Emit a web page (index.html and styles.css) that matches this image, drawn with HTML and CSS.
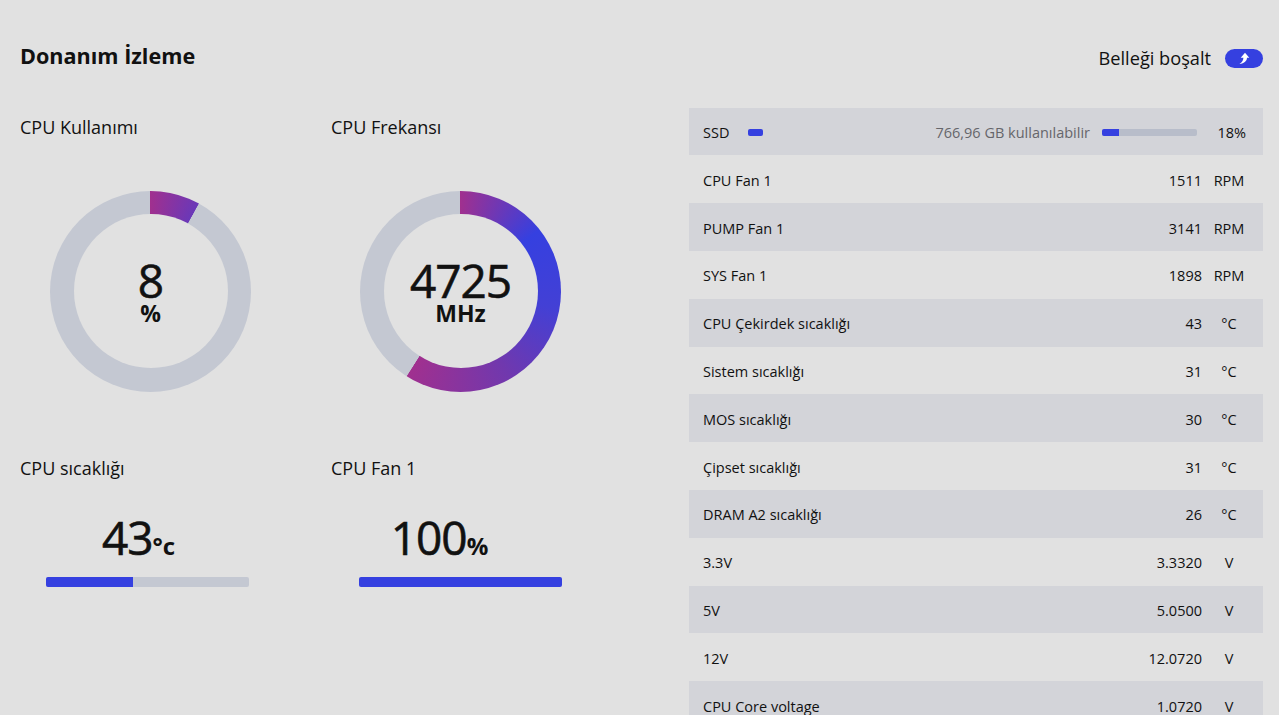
FILE: index.html
```html
<!doctype html>
<html lang="tr">
  <head>
    <meta charset="UTF-8" />
    <meta name="viewport" content="width=device-width, initial-scale=1.0" />
    <title>Donanım İzleme</title>
    <link rel="stylesheet" href="styles.css">
  </head>
  <body>
    <div class="page">
      <div class="header">
        <h1>Donanım İzleme</h1>
        <div class="release">
          <span>Belleği boşalt</span>
          <button class="release-btn" aria-label="Belleği boşalt">
            <svg width="14" height="14" viewBox="0 0 14 14">
              <path d="M8 1.8 L12.3 6.8 L10 6.8 C10 9.8 7.5 12.4 2.4 13 C5 11.4 6.4 9.4 6.4 6.8 L3.7 6.8 Z" fill="#fff" />
            </svg>
          </button>
        </div>
      </div>

      <div class="content">
        <!-- Göstergeler -->
        <div class="gauges">
          <div class="gauge-box">
            <h2>CPU Kullanımı</h2>
            <div class="ring ring-usage">
              <div class="ring-inner">
                <span class="ring-value">8</span>
                <span class="ring-unit">%</span>
              </div>
            </div>
          </div>
          <div class="gauge-box">
            <h2>CPU Frekansı</h2>
            <div class="ring ring-freq">
              <div class="ring-inner">
                <span class="ring-value">4725</span>
                <span class="ring-unit">MHz</span>
              </div>
            </div>
          </div>
          <div class="gauge-box">
            <h2>CPU sıcaklığı</h2>
            <div class="stat">
              <div class="stat-value">43<span class="stat-unit">°c</span></div>
              <div class="stat-bar"><div class="stat-fill" style="width: 43%"></div></div>
            </div>
          </div>
          <div class="gauge-box">
            <h2>CPU Fan 1</h2>
            <div class="stat stat-fan">
              <div class="stat-value">100<span class="stat-unit">%</span></div>
              <div class="stat-bar"><div class="stat-fill" style="width: 100%"></div></div>
            </div>
          </div>
        </div>

        <!-- Sensör listesi -->
        <div class="sensors">
          <div class="row ssd">
            <span class="row-name">SSD</span>
            <span class="ssd-tag"></span>
            <span class="ssd-free">766,96 GB kullanılabilir</span>
            <span class="ssd-bar"><span class="ssd-fill" style="width: 18%"></span></span>
            <span class="ssd-pct">18%</span>
          </div>
          <div class="row"><span class="row-name">CPU Fan 1</span><span class="row-val">1511</span><span class="row-unit">RPM</span></div>
          <div class="row"><span class="row-name">PUMP Fan 1</span><span class="row-val">3141</span><span class="row-unit">RPM</span></div>
          <div class="row"><span class="row-name">SYS Fan 1</span><span class="row-val">1898</span><span class="row-unit">RPM</span></div>
          <div class="row"><span class="row-name">CPU Çekirdek sıcaklığı</span><span class="row-val">43</span><span class="row-unit">°C</span></div>
          <div class="row"><span class="row-name">Sistem sıcaklığı</span><span class="row-val">31</span><span class="row-unit">°C</span></div>
          <div class="row"><span class="row-name">MOS sıcaklığı</span><span class="row-val">30</span><span class="row-unit">°C</span></div>
          <div class="row"><span class="row-name">Çipset sıcaklığı</span><span class="row-val">31</span><span class="row-unit">°C</span></div>
          <div class="row"><span class="row-name">DRAM A2 sıcaklığı</span><span class="row-val">26</span><span class="row-unit">°C</span></div>
          <div class="row"><span class="row-name">3.3V</span><span class="row-val">3.3320</span><span class="row-unit">V</span></div>
          <div class="row"><span class="row-name">5V</span><span class="row-val">5.0500</span><span class="row-unit">V</span></div>
          <div class="row"><span class="row-name">12V</span><span class="row-val">12.0720</span><span class="row-unit">V</span></div>
          <div class="row"><span class="row-name">CPU Core voltage</span><span class="row-val">1.0720</span><span class="row-unit">V</span></div>
        </div>
      </div>
    </div>
  </body>
</html>
```

FILE: styles.css
```css
html,
body {
  margin: 0;
  height: 715px;
  overflow: hidden;
}
body {
  font-family: "Open Sans", "Noto Sans", sans-serif;
  background-color: #e1e1e1;
  color: #111;
}
.page {
  padding: 0 16px 0 20px;
}
.header {
  display: flex;
  justify-content: space-between;
  align-items: center;
  height: 107.6px;
  padding-top: 3px;
  box-sizing: border-box;
}
h1 {
  margin: 0;
  font-size: 21.6px;
  font-weight: 700;
}
.release {
  display: flex;
  align-items: center;
  gap: 14px;
  margin-top: 6px;
  font-size: 18.2px;
}
.release-btn {
  display: flex;
  align-items: center;
  justify-content: center;
  width: 38px;
  height: 19px;
  padding: 0;
  border: none;
  border-radius: 10px;
  background-color: #3540e0;
}
.content {
  display: flex;
}
.gauges {
  display: grid;
  grid-template-columns: 311px 311px;
  grid-template-rows: 341.4px auto;
  width: 669px;
}
h2 {
  margin: 7.4px 0 0;
  font-size: 18px;
  line-height: 24px;
  font-weight: 400;
}
.ring {
  display: flex;
  align-items: center;
  justify-content: center;
  width: 201px;
  height: 201px;
  margin: 52px 0 0 30px;
  border-radius: 50%;
}
.ring-usage {
  background: conic-gradient(#a0308f 0deg, #6a38b8 28.6deg, #c4c8d2 29deg);
}
.ring-freq {
  margin-left: 29px;
  background: conic-gradient(#a0308f 0deg, #3540e0 52deg, #4340d5 100deg, #7038ae 150deg, #a0308f 212.2deg, #c4c8d2 212.6deg);
}
.ring-inner {
  display: flex;
  flex-direction: column;
  align-items: center;
  width: 154px;
  height: 154px;
  border-radius: 50%;
  background-color: #e1e1e1;
}
.ring-value {
  margin-top: 45px;
  font-size: 46px;
  line-height: 42px;
  letter-spacing: -1px;
  -webkit-text-stroke: 0.6px #111;
}
.ring-unit {
  margin-top: 2px;
  font-size: 23px;
  line-height: 20px;
  font-weight: 700;
}
.stat {
  width: 203px;
  margin: 27px 0 0 26px;
  text-align: center;
}
.stat-fan {
  margin-left: 28px;
}
.stat-value {
  padding-right: 18px;
  font-size: 46px;
  line-height: 60px;
  letter-spacing: -1px;
  -webkit-text-stroke: 0.6px #111;
}
.stat-fan .stat-value {
  padding-right: 42px;
}
.stat-unit {
  font-size: 24px;
  font-weight: 700;
  letter-spacing: 0;
  -webkit-text-stroke: 0;
}
.stat-bar {
  height: 10px;
  margin-top: 1px;
  border-radius: 2px;
  background-color: #c4c8d2;
  overflow: hidden;
}
.stat-fill {
  height: 100%;
  background-color: #3540e0;
}
.sensors {
  width: 574px;
  font-size: 14.5px;
}
.row {
  display: flex;
  align-items: center;
  height: 47.8px;
  padding: 2px 12px 0 14px;
  box-sizing: border-box;
}
.row:nth-child(odd) {
  background-color: #d3d4d9;
}
.row-name {
  flex: 1;
}
.row-val {
  margin-right: 5px;
}
.row-unit {
  width: 44px;
  text-align: center;
}
.ssd .row-name {
  flex: none;
}
.ssd-tag {
  width: 15px;
  height: 7px;
  margin-left: 19px;
  border-radius: 2px;
  background-color: #3540e0;
}
.ssd-free {
  flex: 1;
  text-align: right;
  color: #66666b;
}
.ssd-bar {
  width: 95px;
  height: 7px;
  margin-left: 12px;
  border-radius: 2px;
  background-color: #b8bdca;
  overflow: hidden;
}
.ssd-fill {
  display: block;
  height: 100%;
  background-color: #3540e0;
}
.ssd-pct {
  width: 49px;
  margin-right: 5px;
  text-align: right;
}
```
